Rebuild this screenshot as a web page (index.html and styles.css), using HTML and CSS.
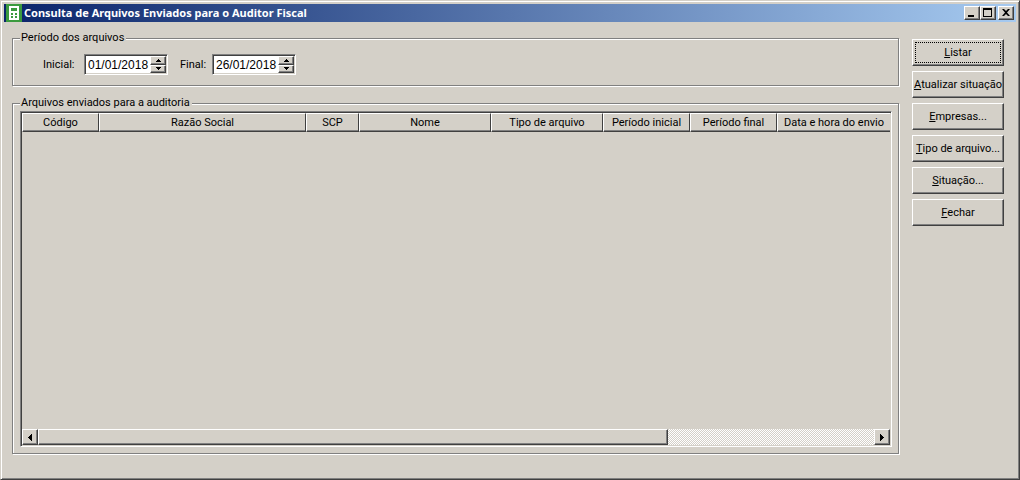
FILE: index.html
```html
<!DOCTYPE html>
<html lang="pt-BR">
<head>
<meta charset="utf-8">
<title>Consulta de Arquivos Enviados para o Auditor Fiscal</title>
<link rel="stylesheet" href="styles.css">
</head>
<body>
<div class="window">
  <header class="titlebar">
    <svg class="app-icon" width="16" height="18" viewBox="0 0 16 18" aria-hidden="true">
      <path fill="#3b9a3f" d="M0 0h16v18H0z"/>
      <path fill="#fff" d="M3 2h10v14H3z"/>
      <path fill="#3b9a3f" d="M5 4h6v3H5zM5 9h2v2H5zM9 9h2v2H9zM5 12h2v2H5zM9 12h2v2H9z"/>
    </svg>
    <h1 class="title">Consulta de Arquivos Enviados para o Auditor Fiscal</h1>
    <div class="caption-buttons">
      <button class="bevel caption" type="button" aria-label="Minimizar"><svg width="12" height="10" viewBox="0 0 12 10"><path d="M2 7h6v2H2z"/></svg></button>
      <button class="bevel caption" type="button" aria-label="Maximizar"><svg width="12" height="10" viewBox="0 0 12 10"><path fill-rule="evenodd" d="M1 0h9v9H1zM2 2v6h7V2z"/></svg></button>
      <button class="bevel caption close" type="button" aria-label="Fechar janela"><svg width="12" height="10" viewBox="0 0 12 10"><path d="M2 1h2l2 2 2-2h2L7 4.500 10 8H8L6 6 4 8H2l3-3.500z"/></svg></button>
    </div>
  </header>
  <main class="content">
    <div class="panels">
      <fieldset class="group">
        <legend>Período dos arquivos</legend>
        <div class="period">
          <label for="inicial">Inicial:</label>
          <div class="date">
            <input id="inicial" type="text" value="01/01/2018">
            <div class="spin">
              <button class="bevel" type="button" aria-label="Aumentar data inicial"><svg width="5" height="3" viewBox="0 0 5 3"><path d="M2 0h1v1h1v1h1v1H0V2h1V1h1z"/></svg></button>
              <button class="bevel" type="button" aria-label="Diminuir data inicial"><svg width="5" height="3" viewBox="0 0 5 3"><path d="M0 0h5v1H4v1H3v1H2V2H1V1H0z"/></svg></button>
            </div>
          </div>
          <label class="final" for="final">Final:</label>
          <div class="date">
            <input id="final" type="text" value="26/01/2018">
            <div class="spin">
              <button class="bevel" type="button" aria-label="Aumentar data final"><svg width="5" height="3" viewBox="0 0 5 3"><path d="M2 0h1v1h1v1h1v1H0V2h1V1h1z"/></svg></button>
              <button class="bevel" type="button" aria-label="Diminuir data final"><svg width="5" height="3" viewBox="0 0 5 3"><path d="M0 0h5v1H4v1H3v1H2V2H1V1H0z"/></svg></button>
            </div>
          </div>
        </div>
      </fieldset>
      <fieldset class="group files">
        <legend>Arquivos enviados para a auditoria</legend>
        <div class="grid">
          <div class="grid-view">
            <table>
              <colgroup><col class="c-code"><col class="c-name"><col class="c-scp"><col class="c-nome"><col class="c-type"><col class="c-date"><col class="c-date"><col></colgroup>
              <thead>
                <tr><th>Código</th><th>Razão Social</th><th>SCP</th><th>Nome</th><th>Tipo de arquivo</th><th>Período inicial</th><th>Período final</th><th>Data e hora do envio</th></tr>
              </thead>
              <tbody></tbody>
            </table>
          </div>
          <div class="scrollbar">
            <button class="bevel arrow" type="button" aria-label="Rolar para a esquerda"><svg width="4" height="7" viewBox="0 0 4 7"><path d="M4 0v7H3V6H2V5H1V4H0V3h1V2h1V1h1V0z"/></svg></button>
            <div class="track"><div class="bevel thumb"></div></div>
            <button class="bevel arrow" type="button" aria-label="Rolar para a direita"><svg width="4" height="7" viewBox="0 0 4 7"><path d="M0 0v7h1V6h1V5h1V4h1V3H3V2H2V1H1V0z"/></svg></button>
          </div>
        </div>
      </fieldset>
    </div>
    <nav class="actions" aria-label="Ações">
      <button class="bevel action focused" type="button"><u>L</u>istar</button>
      <button class="bevel action" type="button"><u>A</u>tualizar situação</button>
      <button class="bevel action" type="button"><u>E</u>mpresas...</button>
      <button class="bevel action" type="button"><u>T</u>ipo de arquivo...</button>
      <button class="bevel action" type="button"><u>S</u>ituação...</button>
      <button class="bevel action" type="button"><u>F</u>echar</button>
    </nav>
  </main>
</div>
</body>
</html>
```
FILE: styles.css
```css
:root {
  --face: #d4d0c8;
  --shadow: #808080;
  --dark: #404040;
}

* {
  box-sizing: border-box;
}

body {
  margin: 0;
  font: 11px/16px Roboto, "Liberation Sans", sans-serif;
  color: #000;
  background: var(--face);
}

button,
input {
  font: inherit;
  color: inherit;
}

.window {
  display: flex;
  flex-direction: column;
  min-height: 100vh;
  padding: 3px;
  border: 1px solid;
  border-color: var(--face) var(--dark) var(--dark) var(--face);
  box-shadow: inset 1px 1px 0 #fff, inset -1px -1px 0 var(--shadow);
}

.bevel {
  display: flex;
  align-items: center;
  justify-content: center;
  padding: 0;
  border: 1px solid;
  border-color: #fff var(--dark) var(--dark) #fff;
  border-radius: 0;
  background: var(--face);
  box-shadow: inset -1px -1px 0 var(--shadow);
}

.titlebar {
  display: flex;
  align-items: center;
  height: 18px;
  padding: 0 2px;
  background: linear-gradient(90deg, #0a246a, #a6caf0);
}

.app-icon {
  flex: none;
}

.title {
  flex: 1;
  margin: 0 0 0 2px;
  font: bold 11px/18px "Noto Sans", "Open Sans", sans-serif;
  color: #fff;
  white-space: nowrap;
}

.caption-buttons {
  display: flex;
}

.caption {
  width: 16px;
  height: 14px;
}

.close {
  margin-left: 2px;
}

.content {
  display: flex;
  flex: 1;
  gap: 12px;
  padding: 8px 12px 21px 8px;
}

.panels {
  display: flex;
  flex: 1;
  flex-direction: column;
  gap: 8px;
  min-width: 0;
}

.group {
  position: relative;
  min-width: 0;
  margin: 0;
  padding: 0 8px 8px;
  border: 0;
}

/* Etched frame, its top edge running through the middle of the legend. */
.group::before {
  content: "";
  position: absolute;
  inset: -8px 1px 1px 0;
  border: 1px solid var(--shadow);
  box-shadow: inset 1px 1px 0 #fff, 1px 1px 0 #fff;
  pointer-events: none;
}

legend {
  position: relative;
  z-index: 1;
  padding: 0 2px 0 1px;
  background: var(--face);
}

.period {
  display: flex;
  align-items: center;
  padding: 8px 0 4px 23px;
}

.period label {
  width: 31px;
  margin-right: 10px;
}

.period .final {
  width: 26px;
  margin: 0 6px 0 12px;
}

.date {
  display: flex;
  width: 84px;
  height: 21px;
  padding: 1px;
  border: 1px solid;
  border-color: var(--shadow) #fff #fff var(--shadow);
  box-shadow: inset 1px 1px 0 var(--dark), inset -1px -1px 0 var(--face);
  background: #fff;
}

.date input {
  flex: 1;
  width: 0;
  min-width: 0;
  padding: 0 0 0 2px;
  border: 0;
  outline: 0;
  background: none;
  font-size: 12px;
  font-family: "Liberation Sans", sans-serif;
}

.spin {
  display: grid;
  grid-template-rows: 1fr 1fr;
  width: 16px;
}

.files {
  display: flex;
  flex: 1;
  flex-direction: column;
}

.grid {
  display: flex;
  flex: 1;
  flex-direction: column;
  padding: 1px;
  border: 1px solid;
  border-color: var(--shadow) #fff #fff var(--shadow);
  box-shadow: inset 1px 1px 0 var(--dark);
}

.grid-view {
  flex: 1;
}

table {
  width: 100%;
  table-layout: fixed;
  border-spacing: 0;
}

.c-code { width: 77px; }
.c-name { width: 207px; }
.c-scp { width: 53px; }
.c-nome { width: 132px; }
.c-type { width: 112px; }
.c-date { width: 87px; }

th {
  height: 19px;
  padding: 0;
  border: 1px solid;
  border-color: #fff var(--dark) var(--dark) #fff;
  box-shadow: inset 0 -1px 0 var(--shadow);
  font-weight: normal;
  line-height: 16px;
  white-space: nowrap;
}

th:last-child {
  border-right: 0;
}

.scrollbar {
  display: flex;
  height: 16px;
}

.arrow {
  width: 16px;
}

.track {
  flex: 1;
  background: repeating-conic-gradient(#fff 0 25%, var(--face) 0 50%) 0 0 / 2px 2px;
}

.thumb {
  width: 75.4%;
  height: 100%;
}

.actions {
  display: flex;
  flex-direction: column;
  gap: 5px;
  width: 92px;
  padding-top: 9px;
}

.action {
  height: 27px;
  white-space: nowrap;
}

.action u {
  text-underline-offset: 1px;
}

.focused {
  outline: 1px dotted #000;
  outline-offset: -4px;
}
```
